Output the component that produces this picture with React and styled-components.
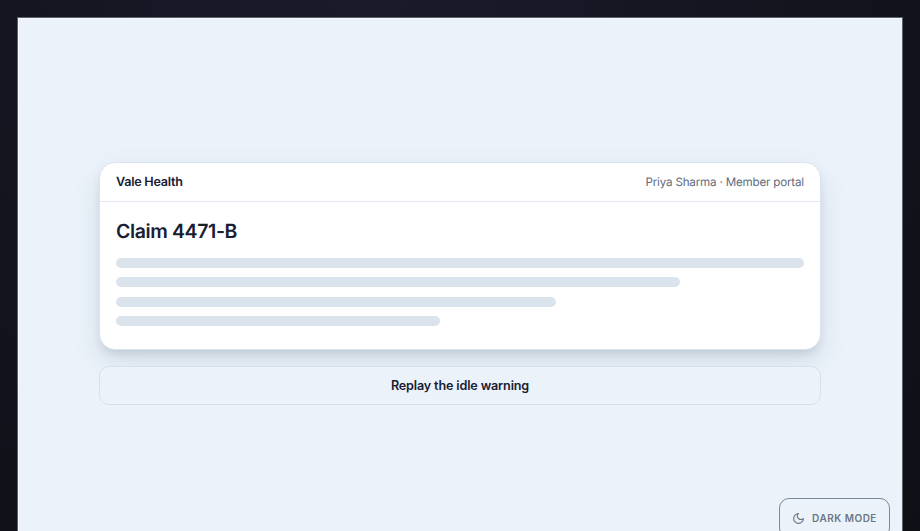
import React from "react";
import styled, { createGlobalStyle } from "styled-components";

const GlobalStyle = createGlobalStyle`
  html, body {
    margin: 0;
    height: 100%;
    overflow: hidden;
    background: #14141f;
  }
  body {
    font-family: "Inter", "Liberation Sans", sans-serif;
    text-rendering: geometricPrecision;
  }
`;

const Backdrop = styled.div`
  height: 100vh;
  padding: 18px 18px 0;
  box-sizing: border-box;
  overflow: hidden;
  background: radial-gradient(ellipse at 40% 0%, #1a1a2b 0%, #14141f 55%, #0f0f16 100%);
`;

const Frame = styled.main`
  position: relative;
  height: 100vh;
  box-sizing: border-box;
  background: #ebf2fa;
  box-shadow: inset 1px 1px 0 #f6f9fc, 0 0 0 1px #5c6068;
  display: flex;
  flex-direction: column;
  align-items: center;
  justify-content: center;
  gap: 16px;
`;

const Card = styled.section`
  width: 722px;
  box-sizing: border-box;
  background: #fff;
  border: 1px solid #dbe4ef;
  border-radius: 16px;
  box-shadow: 0 6px 8px -2px rgba(100, 116, 139, 0.2), 0 12px 28px rgba(100, 116, 139, 0.16);
  overflow: hidden;
`;

const CardHeader = styled.header`
  height: 39px;
  box-sizing: border-box;
  padding: 0 16px;
  display: flex;
  align-items: center;
  justify-content: space-between;
  border-bottom: 1px solid #e2e8f0;
`;

const Brand = styled.span`
  padding-top: 1px;
  font-size: 12.6px;
  font-weight: 600;
  letter-spacing: -0.25px;
  color: #172033;
`;

const Member = styled.span`
  font-size: 11.6px;
  letter-spacing: -0.18px;
  color: #5f6b7d;
`;

const CardBody = styled.div`
  padding: 16px 16px 23px;
`;

const Title = styled.h1`
  margin: 0 0 14.25px;
  font-size: 19.5px;
  line-height: 26px;
  font-weight: 600;
  letter-spacing: -0.38px;
  color: #172033;
`;

const Lines = styled.div`
  display: flex;
  flex-direction: column;
  gap: 9.4px;
`;

const Line = styled.div`
  height: 10px;
  width: ${({ $width }) => $width};
  border-radius: 5px;
  background: #dbe3ec;
`;

const ReplayButton = styled.button`
  width: 722px;
  height: 39px;
  box-sizing: border-box;
  padding: 0 0 1px;
  background: #ebf2fa;
  border: 1px solid #d7e0ec;
  border-radius: 10px;
  font-family: inherit;
  font-size: 12.6px;
  font-weight: 600;
  letter-spacing: -0.15px;
  color: #172033;
  cursor: pointer;
`;

const ThemeToggle = styled.button`
  position: absolute;
  right: 12px;
  bottom: 11px;
  height: 40px;
  width: 111px;
  box-sizing: border-box;
  display: flex;
  align-items: center;
  justify-content: center;
  gap: 7px;
  background: transparent;
  border: 1px solid #7c8798;
  border-radius: 10px;
  font-family: inherit;
  font-size: 10px;
  font-weight: 600;
  letter-spacing: 0.05em;
  color: #6b7686;
  cursor: pointer;
`;

function MoonIcon() {
  return (
    <svg width="13" height="13" viewBox="0 0 24 24" fill="none" stroke="currentColor" strokeWidth="2" strokeLinecap="round" strokeLinejoin="round">
      <path d="M12 3a6 6 0 0 0 9 9 9 9 0 1 1-9-9Z" />
    </svg>
  );
}

const lineWidths = ["100%", "82%", "64%", "47.1%"];

export default function App() {
  return (
    <>
      <GlobalStyle />
      <Backdrop>
        <Frame>
          <Card>
            <CardHeader>
              <Brand>Vale Health</Brand>
              <Member>Priya Sharma · Member portal</Member>
            </CardHeader>
            <CardBody>
              <Title>Claim 4471-B</Title>
              <Lines>
                {lineWidths.map((w) => (
                  <Line key={w} $width={w} />
                ))}
              </Lines>
            </CardBody>
          </Card>
          <ReplayButton>Replay the idle warning</ReplayButton>
          <ThemeToggle>
            <MoonIcon />
            DARK MODE
          </ThemeToggle>
        </Frame>
      </Backdrop>
    </>
  );
}
